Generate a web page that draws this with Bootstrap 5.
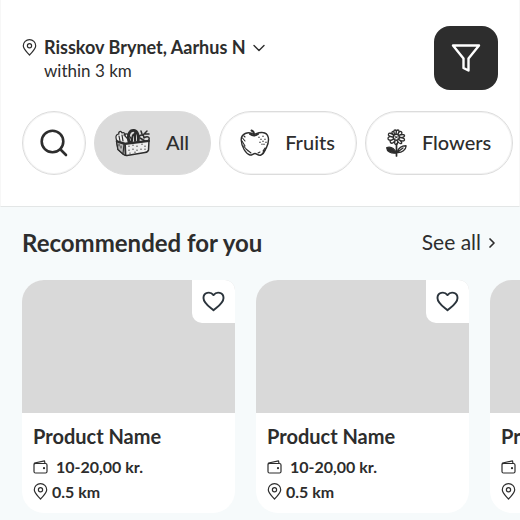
<!DOCTYPE html>
<html lang="en">
<head>
<meta charset="utf-8">
<meta name="viewport" content="width=device-width, initial-scale=1">
<title>Recommended for you</title>
<link rel="stylesheet" href="https://cdn.jsdelivr.net/npm/bootstrap@5.3.0/dist/css/bootstrap.min.css">
<style>
:root { --ink: #2d2d2d; --line: #dcdcdc; --fill: #d9d9d9; }
body { font-family: Lato, "Open Sans", sans-serif; color: var(--ink); background: #f6fafb; font-size: 20px; line-height: 24px; }
svg { display: block; flex: none; fill: none; stroke: currentColor; stroke-linecap: round; stroke-linejoin: round; }
.symbols { position: absolute; width: 0; height: 0; }
.topbar { border: 1px solid #f7f7f7; border-top: 0; border-bottom-color: #e3e6e6; padding: 26px 21px 31px; }
.place { color: inherit; font-size: 18px; gap: 7px; }
.place-area { font-size: 17px; line-height: 20px; padding-left: 22px; }
.filter-btn { width: 64px; height: 64px; border-radius: 16px; background: var(--ink); color: #fff; }
.scroller { overflow-x: auto; scrollbar-width: none; }
.scroller::-webkit-scrollbar { display: none; }
.chips { margin: 21px -21px 0 0; gap: 8px; }
.chip { height: 64px; border: 1px solid var(--line); border-radius: 32px; padding: 0 21px 0 20px; gap: 15px; background: #fff; color: var(--ink); font-size: 20px; font-weight: 500; flex: none; box-shadow: inset 0 0 0 1px #f3f3f3; }
.chip span { padding-bottom: 2px; }
.chip.active { background: #dbdbdb; box-shadow: none; }
.chip-search { width: 64px; padding: 0; }
.picks { padding: 22px 0 9px 22px; }
.picks-title { font-size: 24px; line-height: 28px; }
.see-all { color: inherit; font-size: 21px; gap: 7px; padding-bottom: 2px; }
.see-all svg { margin-top: 2px; }
.cards { gap: 21px; margin-top: 23px; }
.product { width: 213px; border-radius: 22px; flex: none; }
.photo { height: 133px; background: var(--fill); border-radius: 22px 10px 0 0; }
.like { width: 43px; height: 43px; border-radius: 0 10px 0 10px; background: #fff; color: #2b343c; }
.facts { padding: 9px 11px 9px; font-size: 16px; line-height: 25px; }
.product-name { font-size: 20px; line-height: 28px; }
</style>
<script src="https://cdn.jsdelivr.net/npm/bootstrap@5.3.0/dist/js/bootstrap.bundle.min.js"></script>
</head>
<body>
<svg class="symbols" aria-hidden="true">
  <symbol id="pin" viewBox="0 0 14 17"><path d="M7 16C4.500 13 .8 10.300.8 6.800a6.200 6.200 0 0 1 12.400 0C13.200 10.300 9.500 13 7 16Z"/><circle cx="7" cy="6.800" r="2.100"/></symbol>
  <symbol id="wallet" viewBox="0 0 15 14"><path d="M1 4.500 1.500 3 11.500 .8 12 3.500M1 4.500Q1 3.500 2.500 3.500H12.500Q14 3.500 14 5V11.500Q14 13 12.500 13H2.500Q1 13 1 11.500Z"/><circle cx="11" cy="8.200" r=".5"/></symbol>
  <symbol id="heart" viewBox="0 0 24 22"><path d="M12 20.200 C9 17.500 1.500 13 1.500 7.300 C1.500 1.500 8.500 -.2 12 4.300 C15.500 -.2 22.500 1.500 22.500 7.300 C22.500 13 15 17.500 12 20.200Z"/></symbol>
</svg>

<header class="topbar bg-white">
  <div class="d-flex justify-content-between align-items-start">
    <div class="pt-2">
      <button type="button" class="place btn border-0 p-0 d-flex align-items-center fw-bold lh-base">
        <svg width="15" height="17" stroke-width="1.200" aria-hidden="true"><use href="#pin"/></svg>
        <span>Risskov Brynet, Aarhus N</span>
        <svg width="12" height="8" viewBox="0 0 12 8" stroke-width="1.400" aria-hidden="true"><path d="m1 1.500 5 5 5-5"/></svg>
      </button>
      <div class="place-area">within 3 km</div>
    </div>
    <button type="button" class="filter-btn btn border-0 p-0 d-flex align-items-center justify-content-center" aria-label="Filter">
      <svg width="32" height="30" viewBox="0 0 32 30" stroke-width="2.400" stroke-linejoin="miter" aria-hidden="true"><path d="M3 2.500H29L18.500 15.500V27.500L13.500 25V15.500Z"/></svg>
    </button>
  </div>
  <nav class="chips scroller d-flex" aria-label="Categories">
    <button type="button" class="chip chip-search d-flex align-items-center justify-content-center" aria-label="Search">
      <svg width="28" height="28" viewBox="0 0 28 28" stroke-width="2.600" aria-hidden="true"><circle cx="12.500" cy="12.500" r="10.800"/><path d="m20.500 20.500 5.500 5.500"/></svg>
    </button>
    <button type="button" class="chip active d-flex align-items-center" aria-pressed="true">
      <svg width="36" height="28" viewBox="0 0 36 28" stroke-width="1.200" aria-hidden="true">
        <path d="M2 12C0 8 1 5 4 5 3 3 6 1 7 4 9 3 11 5 10 7L16 13M9 6C12 3 16 7 17 13M4 7 5 12M7 6 8 12M11 8 14 12" fill="#eee"/>
        <path d="M14 13C12 5 15 1 19 1.500 23 2 24 8 23 13" stroke-width="2.800"/>
        <path d="M17 12C17 7 18 5 20 5M20 4V12" stroke-width="2"/>
        <path d="M23 9C25 5 29 5 29 9 33 6 36 9 33 12M28 6 32 2M27 5 26 2M30 5 34 5M25 9 30 12" stroke-width="1.500"/>
        <path d="M1.500 12 10 14.500 34 11.500 33.500 21Q33 23 30 23.500L12 26.500Q10 27 8 25L3 20.500Z" fill="#eee" stroke-width="1.500"/>
        <path d="M1.500 12 3 20.500 8 25 9 15Z" fill="#bbb"/><path d="M10 15 10.500 26M2 12.500 10 15 34 12" stroke-width="1.900"/>
        <path d="M14 17v.5M18 16v.5M22 17v.5M27 15v.5M30 17v.5M14 21v.5M18 20v.5M22 21v.5M26 20v.5M30 20v.5M15 24v.3M20 23v.5M4 15v2M6 17v2" stroke-width="1"/>
      </svg>
      <span>All</span>
    </button>
    <button type="button" class="chip d-flex align-items-center">
      <svg width="30" height="28" viewBox="0 0 30 28" stroke-width="1.400" aria-hidden="true">
        <path d="M14 5.500C8 1.500 1 5 1.200 11 1.500 18 6 25 10 26 12 26.500 13 24.500 15 24.500 17 24.500 18 27 21 26 25 25 24 22 26.500 18.500 30 11 29 4 22.500 3.500 19 3 17 4.500 14 5.500Z"/>
        <path d="M14 5.500C14 3 13 2 11.500 1.500M10 5Q14 8 18 5" stroke-width="2"/>
        <path d="M2 12 5 17M2.500 9 5 12M3.500 17 8 22M6 20 11 24M4 7 5 8M18 24 20 23M22 25 25 21M23 22 25 19" stroke-width="1.100"/>
        <path d="M19 8v.4M23 7v.4M21 10v.5M25 10v.5M23 12v.5M20 13v.4M24 15v.4M22 15v.3M26 13v.4" stroke-width="1.200"/>
      </svg>
      <span>Fruits</span>
    </button>
    <button type="button" class="chip d-flex align-items-center">
      <svg width="21" height="28" viewBox="0 0 21 28" stroke-width="1.300" aria-hidden="true">
        <path d="M8.500 5Q7 1 9 1T10 5Q10 1 12 1T12 5Q14 1 15.500 3T13.500 6Q19 5 18.500 7T14 8.500Q19 9 18.500 11T13.500 11Q17 14 15 14.500T11.500 12Q12 15.500 10 15.500T9 12Q6 15.500 4.500 13.500T7 10.500Q2 12 2 9.500T6.500 8Q1.500 7 2.500 5T7.500 6Q5 3 6.500 2.500T8.500 5Z"/>
        <circle cx="10.300" cy="8.300" r="3" stroke-width="1.500"/><path d="M9 7.500 11.500 9M11.500 7 9 9.500" stroke-width="1"/>
        <path d="M10.500 15V27" stroke-width="1.700"/>
        <path d="M10.500 24C8 19 4 17.500 .8 18.500 .5 22 5 25 10.500 24Z" fill="currentColor"/>
        <path d="M11 23.500C12 19 16 16.500 20.200 16.800 20 20.500 16 24 11 23.500ZM11 23.500 17 19"/>
      </svg>
      <span>Flowers</span>
    </button>
  </nav>
</header>

<main class="picks">
  <div class="d-flex justify-content-between align-items-center pe-4">
    <h1 class="picks-title fw-bold m-0">Recommended for you</h1>
    <a href="#" class="see-all d-flex align-items-center text-decoration-none">See all
      <svg width="8" height="12" viewBox="0 0 8 12" stroke="#111" stroke-width="1.700" aria-hidden="true"><path d="m2 2 4 4-4 4"/></svg>
    </a>
  </div>
  <div class="cards scroller d-flex">
    <article class="product bg-white">
      <div class="photo d-flex justify-content-end"><button type="button" class="like btn border-0 p-0 d-flex align-items-center justify-content-center" aria-label="Save product"><svg width="23" height="21" stroke-width="2" aria-hidden="true"><use href="#heart"/></svg></button></div>
      <div class="facts fw-bold">
        <h2 class="product-name fw-bold m-0">Product Name</h2>
        <div class="d-flex align-items-center gap-2 mt-1"><svg width="15" height="14" stroke-width="1.200" aria-hidden="true"><use href="#wallet"/></svg>10-20,00 kr.</div>
        <div class="d-flex align-items-center gap-1"><svg width="15" height="17" stroke-width="1.200" aria-hidden="true"><use href="#pin"/></svg>0.5 km</div>
      </div>
    </article>
    <article class="product bg-white">
      <div class="photo d-flex justify-content-end"><button type="button" class="like btn border-0 p-0 d-flex align-items-center justify-content-center" aria-label="Save product"><svg width="23" height="21" stroke-width="2" aria-hidden="true"><use href="#heart"/></svg></button></div>
      <div class="facts fw-bold">
        <h2 class="product-name fw-bold m-0">Product Name</h2>
        <div class="d-flex align-items-center gap-2 mt-1"><svg width="15" height="14" stroke-width="1.200" aria-hidden="true"><use href="#wallet"/></svg>10-20,00 kr.</div>
        <div class="d-flex align-items-center gap-1"><svg width="15" height="17" stroke-width="1.200" aria-hidden="true"><use href="#pin"/></svg>0.5 km</div>
      </div>
    </article>
    <article class="product bg-white">
      <div class="photo d-flex justify-content-end"><button type="button" class="like btn border-0 p-0 d-flex align-items-center justify-content-center" aria-label="Save product"><svg width="23" height="21" stroke-width="2" aria-hidden="true"><use href="#heart"/></svg></button></div>
      <div class="facts fw-bold">
        <h2 class="product-name fw-bold m-0">Product Name</h2>
        <div class="d-flex align-items-center gap-2 mt-1"><svg width="15" height="14" stroke-width="1.200" aria-hidden="true"><use href="#wallet"/></svg>10-20,00 kr.</div>
        <div class="d-flex align-items-center gap-1"><svg width="15" height="17" stroke-width="1.200" aria-hidden="true"><use href="#pin"/></svg>0.5 km</div>
      </div>
    </article>
  </div>
</main>
</body>
</html>
